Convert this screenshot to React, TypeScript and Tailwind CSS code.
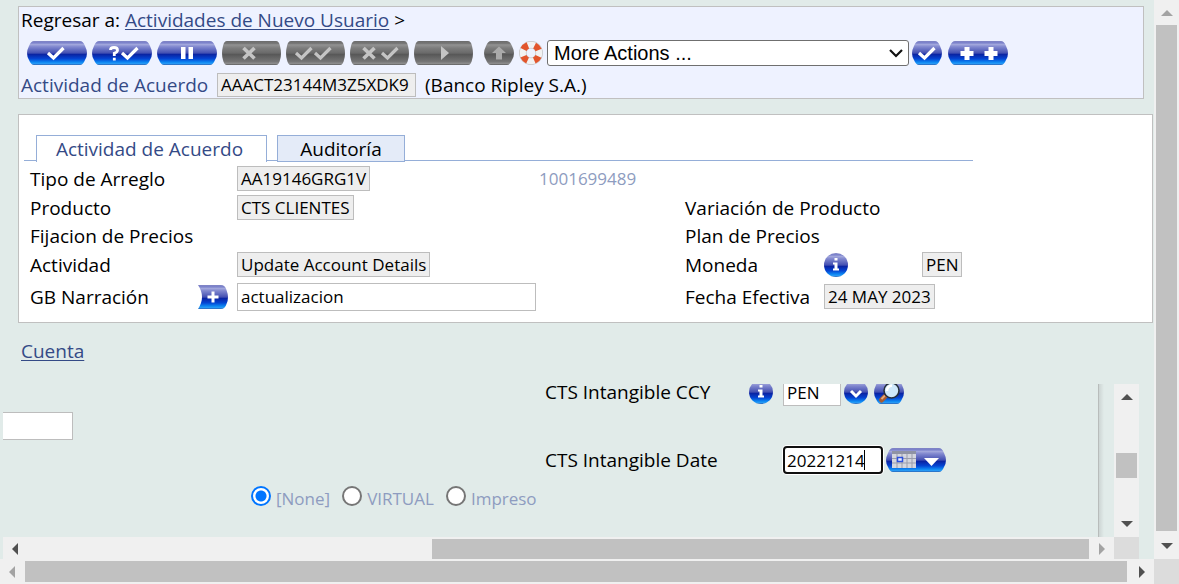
import type { ReactNode } from "react";

type Tone = "blue" | "gray";

function Gradients() {
  return (
    <svg width="0" height="0" className="absolute" aria-hidden="true">
      <defs>
        <linearGradient id="blue" x1="0" y1="0" x2="0" y2="1">
          <stop offset="0" stopColor="#8084c4" />
          <stop offset="0.08" stopColor="#7b82cc" />
          <stop offset="0.14" stopColor="#a3a8dc" />
          <stop offset="0.24" stopColor="#8188cf" />
          <stop offset="0.5" stopColor="#4450b2" />
          <stop offset="0.56" stopColor="#0a24a4" />
          <stop offset="0.74" stopColor="#0444d2" />
          <stop offset="0.88" stopColor="#0c86f2" />
          <stop offset="0.95" stopColor="#2b9cf4" />
          <stop offset="1" stopColor="#2a5cae" />
        </linearGradient>
        <linearGradient id="gray" x1="0" y1="0" x2="0" y2="1">
          <stop offset="0" stopColor="#6c6c6c" />
          <stop offset="0.1" stopColor="#767676" />
          <stop offset="0.16" stopColor="#929292" />
          <stop offset="0.3" stopColor="#7c7c7c" />
          <stop offset="0.5" stopColor="#6a6a6a" />
          <stop offset="0.56" stopColor="#585858" />
          <stop offset="0.85" stopColor="#747474" />
          <stop offset="0.94" stopColor="#8c8c8c" />
          <stop offset="1" stopColor="#5c5c5c" />
        </linearGradient>
      </defs>
    </svg>
  );
}

const WIDE = "M7 0H53Q56 0 58 5Q60 9 60 12Q60 16 58 19Q56 24 53 24H7Q4 24 2 19Q0 16 0 12Q0 9 2 5Q4 0 7 0Z";
const WIDE_GRAY = "M5 0H54Q57 0 58 5Q59 9 59 12Q59 16 58 19Q57 24 54 24H5Q2 24 1 19Q0 16 0 12Q0 9 1 5Q2 0 5 0Z";
const SMALL = "M7 0H23Q26 0 28 5Q30 9 30 12Q30 16 28 19Q26 24 23 24H7Q4 24 2 19Q0 16 0 12Q0 9 2 5Q4 0 7 0Z";

function Pill({ label, tone = "blue", small, children }: { label: string; tone?: Tone; small?: boolean; children: ReactNode }) {
  const w = small ? 30 : tone === "gray" ? 59 : 60;
  const shape = small ? SMALL : tone === "gray" ? WIDE_GRAY : WIDE;
  return (
    <button type="button" aria-label={label} disabled={tone === "gray"} className="block shrink-0">
      <svg width={w} height="24" viewBox={`0 0 ${w} 24`} className="block">
        <path d={shape} fill={tone === "blue" ? "url(#blue)" : "url(#gray)"} />
        {children}
      </svg>
    </button>
  );
}

function Check({ x, color = "#fff" }: { x: number; color?: string }) {
  return <path d={`M${x - 8} 12L${x - 2.5} 17L${x + 7.5} 7`} fill="none" stroke={color} strokeWidth="3.2" />;
}

function Cross({ x, color }: { x: number; color: string }) {
  return <path d={`M${x - 5.5} 7L${x + 5.5} 17.5M${x + 5.5} 7L${x - 5.5} 17.5`} stroke={color} strokeWidth="3.6" />;
}

function Plus({ x, y = 12.5, r = 6.5, w = 5 }: { x: number; y?: number; r?: number; w?: number }) {
  return <path d={`M${x - r} ${y}H${x + r}M${x} ${y - r}V${y + r}`} stroke="#fff" strokeWidth={w} />;
}

function InfoButton({ label }: { label: string }) {
  return (
    <button type="button" aria-label={label} className="block shrink-0">
      <svg width="24" height="24" viewBox="0 0 24 24" className="block">
        <circle cx="12" cy="12" r="12" fill="url(#blue)" />
        <path d="M10.5 5H13.5V7.5H10.5ZM9 9.5H13.5V15.5H15V17.5H9V15.5H10.5V11.5H9Z" fill="#fff" />
      </svg>
    </button>
  );
}

function LifeRing() {
  return (
    <button type="button" aria-label="Ayuda" className="block shrink-0">
      <svg width="24" height="24" viewBox="0 0 24 24" className="block">
        <circle cx="12" cy="12" r="8.2" fill="none" stroke="#c4c4c4" strokeWidth="7.4" />
        <circle cx="12" cy="12" r="8.2" fill="none" stroke="#f2f2f2" strokeWidth="6" />
        <circle cx="12" cy="12" r="8.2" fill="none" stroke="#e2552c" strokeWidth="6.6" strokeDasharray="6 6.88" strokeDashoffset="9.44" />
      </svg>
    </button>
  );
}

function ReadOnly({ children }: { children: ReactNode }) {
  return (
    <span className="inline-flex h-[25px] items-center border border-[#bdbdbd] bg-[#eeeeee] px-[3px] text-[17px] whitespace-nowrap">
      {children}
    </span>
  );
}

const ARROWS = {
  up: "M4 9L10 3L16 9Z",
  down: "M4 3L10 9L16 3Z",
  left: "M9 4L3 10L9 16Z",
  right: "M3 4L9 10L3 16Z",
};

function Arrow({ dir, dim }: { dir: keyof typeof ARROWS; dim?: boolean }) {
  const vertical = dir === "up" || dir === "down";
  const w = vertical ? 20 : 12;
  const h = vertical ? 12 : 20;
  return (
    <svg width={w} height={h} viewBox={`0 0 ${w} ${h}`} className="block shrink-0">
      <path d={ARROWS[dir]} fill={dim ? "#a3a3a3" : "#505050"} />
    </svg>
  );
}

function Header() {
  const g = "#c4c4c4";
  return (
    <header className="mr-[10px] ml-[18px] border border-[#c0c0c0] bg-[#eef2ff] pl-0.5">
      <p className="h-[27px] leading-[27px]">
        Regresar a:{" "}
        <a href="#usuario" className="text-[#344a86] underline underline-offset-2">Actividades de Nuevo Usuario</a> &gt;
      </p>
      <div className="flex h-[38px] items-center pl-1.5">
        <div className="flex gap-[5px]">
          <Pill label="Validar"><Check x={29} /></Pill>
          <Pill label="Verificar">
            <path d="M18.5 9Q18.5 6.5 22 6.5Q25.5 6.5 25.5 9.2Q25.5 11 22.3 12.3V15M22.3 16.8V19.5" fill="none" stroke="#fff" strokeWidth="2.8" />
            <Check x={38} />
          </Pill>
          <Pill label="Retener"><path d="M24 6H28.5V18H24ZM31.5 6H36V18H31.5Z" fill="#fff" /></Pill>
          <Pill label="Eliminar" tone="gray"><Cross x={27} color={g} /></Pill>
          <Pill label="Autorizar" tone="gray"><Check x={18} color={g} /><Check x={37} color={g} /></Pill>
          <Pill label="Reversar" tone="gray"><Cross x={19} color={g} /><Check x={40} color={g} /></Pill>
          <Pill label="Siguiente" tone="gray"><path d="M27 5L35 12L27 19Z" fill={g} /></Pill>
        </div>
        <div className="ml-[11px] flex items-center gap-[5px]">
          <Pill label="Subir" tone="gray" small><path d="M15 5.5L22 12H18V18.5H12V12H8Z" fill="#aaa" /></Pill>
          <LifeRing />
        </div>
        <div className="relative ml-[4px] w-[362px]">
          <select aria-label="More Actions" className="h-[26px] w-full appearance-none rounded-[3px] border border-[#6f6f6f] bg-white pl-1.5 font-['Liberation_Sans',sans-serif] text-xl leading-6">
            <option>More Actions ...</option>
          </select>
          <svg width="14" height="9" viewBox="0 0 14 9" className="pointer-events-none absolute top-[9px] right-[6px]">
            <path d="M1 1L7 7L13 1" fill="none" stroke="#111" strokeWidth="2.2" />
          </svg>
        </div>
        <div className="ml-[3px] flex gap-1.5">
          <Pill label="Ejecutar" small><Check x={15} /></Pill>
          <Pill label="Agregar favoritos"><Plus x={19} /><Plus x={43} /></Pill>
        </div>
      </div>
      <div className="flex h-[26px] items-center">
        <span className="w-[196px] font-medium whitespace-nowrap text-[#344a86]">Actividad de Acuerdo</span>
        <span className="inline-flex h-6 w-[199px] items-center border border-[#bdbdbd] bg-[#eeeeee] px-[3px] text-[17px] whitespace-nowrap">AAACT23144M3Z5XDK9</span>
        <span className="ml-[9px]">(Banco Ripley S.A.)</span>
      </div>
    </header>
  );
}

function Details() {
  return (
    <section className="mt-[15px] mr-px ml-[18px] border border-[#c0c0c0] bg-white pt-5 pb-2 pl-[5px]">
      <div role="tablist" className="flex h-[27px] w-[949px]">
        <span className="mb-px w-3 border-b border-[#95aed8]" />
        <button type="button" role="tab" aria-selected="true" className="w-[231px] border border-b-0 border-[#95aed8] bg-white pr-1 text-[#344a86]">
          Actividad de Acuerdo
        </button>
        <span className="mb-px w-[10px] border-b border-[#95aed8]" />
        <button type="button" role="tab" aria-selected="false" className="w-32 border border-[#95aed8] bg-[#e4ebf8]">
          Auditoría
        </button>
        <span className="mb-px flex-1 border-b border-[#95aed8]" />
      </div>
      <div className="mt-0.5 grid grid-cols-[207px_302px_146px_139px_1fr] grid-rows-[29px_29px_28px_29px_35px] items-center pl-1.5">
        <span>Tipo de Arreglo</span>
        <div className="flex"><ReadOnly>AA19146GRG1V</ReadOnly></div>
        <span className="col-span-3 text-[17px] text-[#8e9cc0]">1001699489</span>

        <span>Producto</span>
        <div className="col-span-2 flex"><ReadOnly>CTS CLIENTES</ReadOnly></div>
        <span className="col-span-2">Variación de Producto</span>

        <span className="col-span-3">Fijacion de Precios</span>
        <span className="col-span-2">Plan de Precios</span>

        <span>Actividad</span>
        <div className="col-span-2 flex"><ReadOnly>Update Account Details</ReadOnly></div>
        <span>Moneda</span>
        <div className="flex items-center gap-[74px]">
          <InfoButton label="Información de moneda" />
          <ReadOnly>PEN</ReadOnly>
        </div>

        <div className="flex items-center justify-between pr-[9px]">
          <label htmlFor="narracion">GB Narración</label>
          <button type="button" aria-label="Agregar narración" className="block">
            <svg width="30" height="24" viewBox="0 0 30 24" className="block">
              <path d="M0 0H23Q27 0 28.5 5Q30 9 30 12Q30 16 28.5 19Q27 24 23 24H0Q4 18 4 12Q4 6 0 0Z" fill="url(#blue)" />
              <Plus x={15} y={12} r={5.5} w={3} />
            </svg>
          </button>
        </div>
        <input id="narracion" defaultValue="actualizacion" className="col-span-2 h-7 w-[299px] border border-[#bdbdbd] bg-white px-[3px] text-[17px]" />
        <span>Fecha Efectiva</span>
        <div className="flex"><ReadOnly>24 MAY 2023</ReadOnly></div>
      </div>
    </section>
  );
}

function DeliveryOption({ text, checked }: { text: string; checked?: boolean }) {
  return (
    <label className="flex items-center gap-[5px]">
      <input
        type="radio"
        name="entrega"
        defaultChecked={checked}
        className="mb-1.5 size-5 appearance-none rounded-full border-2 border-[#767676] bg-white checked:border-[#0075ff] checked:bg-[radial-gradient(circle,#0075ff_0_5px,#ffffff_6px)]"
      />
      <span>{text}</span>
    </label>
  );
}

function AccountPane() {
  return (
    <div className="mr-[15px] ml-[3px] flex min-h-0 flex-1 flex-col">
      <div className="flex min-h-0 flex-1">
        <div className="min-w-0 flex-1 overflow-hidden">
          <div className="-mt-1.5 flex h-7 items-center pl-[542px]">
            <label htmlFor="ccy" className="w-[204px] leading-4">CTS Intangible CCY</label>
            <InfoButton label="Información CCY" />
            <input id="ccy" defaultValue="PEN" className="ml-[10px] h-7 w-[58px] border border-[#bdbdbd] bg-white px-[3px] text-[17px]" />
            <button type="button" aria-label="Desplegar monedas" className="ml-[3px] block">
              <svg width="24" height="24" viewBox="0 0 24 24" className="block">
                <circle cx="12" cy="12" r="12" fill="url(#blue)" />
                <path d="M7 11L12 16L17 11" fill="none" stroke="#fff" strokeWidth="3" />
              </svg>
            </button>
            <div className="ml-1.5">
              <Pill label="Buscar moneda" small>
                <path d="M11.500 16L7.500 20" stroke="#a85c34" strokeWidth="5" strokeLinecap="round" />
                <path d="M11 15.500L7.500 19" stroke="#e8a878" strokeWidth="1.8" />
                <circle cx="17.500" cy="10.500" r="7.500" fill="#cfe8fa" stroke="#27303c" strokeWidth="1.600" />
                <path d="M13 11Q13 6 18 5.500" fill="none" stroke="#fff" strokeWidth="2.500" />
              </Pill>
            </div>
          </div>
          <input aria-label="Importe" className="mt-1.5 block h-7 w-[70px] border border-l-0 border-[#bdbdbd] bg-white" />
          <div className="mt-1.5 flex h-7 items-center pl-[542px]">
            <label htmlFor="fecha" className="w-[238px]">CTS Intangible Date</label>
            <div className="relative">
              <input id="fecha" defaultValue="20221214" className="block h-7 w-[100px] rounded-[4px] border-2 border-[#101010] bg-white px-0.5 text-[17px] ring-1 ring-white" />
              <span className="absolute top-1 left-[81px] h-5 w-px bg-black" />
            </div>
            <div className="ml-[3px]">
              <Pill label="Abrir calendario">
                <path d="M6 3H30V20H6Z" fill="#d4d6de" />
                <path d="M6 3H30V6H6Z" fill="#8f93a4" />
                <path d="M6 10.500H30M6 15H30M11 6V20M16 6V20M21 6V20M26 6V20" stroke="#9a9dac" />
                <path d="M11.500 9.500H16.500V13.500H11.500Z" fill="#e8ecff" stroke="#2c50dc" strokeWidth="1.500" />
                <path d="M38 10H53L45.500 18Z" fill="#fff" />
              </Pill>
            </div>
          </div>
          <div className="mt-3 flex gap-3 pl-[248px] text-[17px] text-[#8e9cc0]">
            <DeliveryOption text="[None]" checked />
            <DeliveryOption text="VIRTUAL" />
            <DeliveryOption text="Impreso" />
          </div>
        </div>
        <div className="mr-[10px] w-1.5 border-l border-[#b8bcbb] bg-linear-to-r from-[#cdd5d4] to-[#e1ebe9]" />
        <div className="flex w-[25px] flex-col items-center bg-[#f0f0f0] pt-[7px] pb-[7px]">
          <Arrow dir="up" />
          <span className="mt-[50px] h-[25px] w-[21px] bg-[#c1c1c1]" />
          <span className="flex-1" />
          <Arrow dir="down" />
        </div>
      </div>
      <div className="flex h-[22px]">
        <div className="flex flex-1 items-center bg-[#f0f0f0] pt-0.5">
          <span className="ml-1.5"><Arrow dir="left" /></span>
          <span className="w-[37%]" />
          <span className="h-5 flex-1 bg-[#c1c1c1]" />
          <span className="mr-[6px] ml-[7px]"><Arrow dir="right" dim /></span>
        </div>
        <span className="w-[25px] bg-[#dcdcdc]" />
      </div>
    </div>
  );
}

export default function App() {
  return (
    <div className="flex h-screen flex-col overflow-hidden bg-[#e1ebe9] font-['Open_Sans',sans-serif] text-[19px] leading-6 text-black">
      <Gradients />
      <div className="flex min-h-0 flex-1">
        <main className="flex min-w-0 flex-1 flex-col pt-1.5">
          <Header />
          <Details />
          <nav className="flex h-[61px] items-center pb-1.5 pl-[21px]">
            <a href="#cuenta" className="text-[#344a86] underline underline-offset-2">Cuenta</a>
          </nav>
          <AccountPane />
        </main>
        <div className="flex w-[25px] flex-col items-center bg-[#f0f0f0] pt-[7px] pb-[7px]">
          <Arrow dir="up" dim />
          <span className="mt-1.5 mb-[9px] w-[21px] flex-1 bg-[#c1c1c1]" />
          <Arrow dir="down" />
        </div>
      </div>
      <div className="flex h-[25px]">
        <div className="flex flex-1 items-center bg-[#f0f0f0] px-1.5">
          <Arrow dir="left" dim />
          <span className="mr-[9px] ml-[7px] h-[21px] flex-1 bg-[#c1c1c1]" />
          <Arrow dir="right" />
        </div>
        <span className="w-[25px] bg-[#dcdcdc]" />
      </div>
    </div>
  );
}
